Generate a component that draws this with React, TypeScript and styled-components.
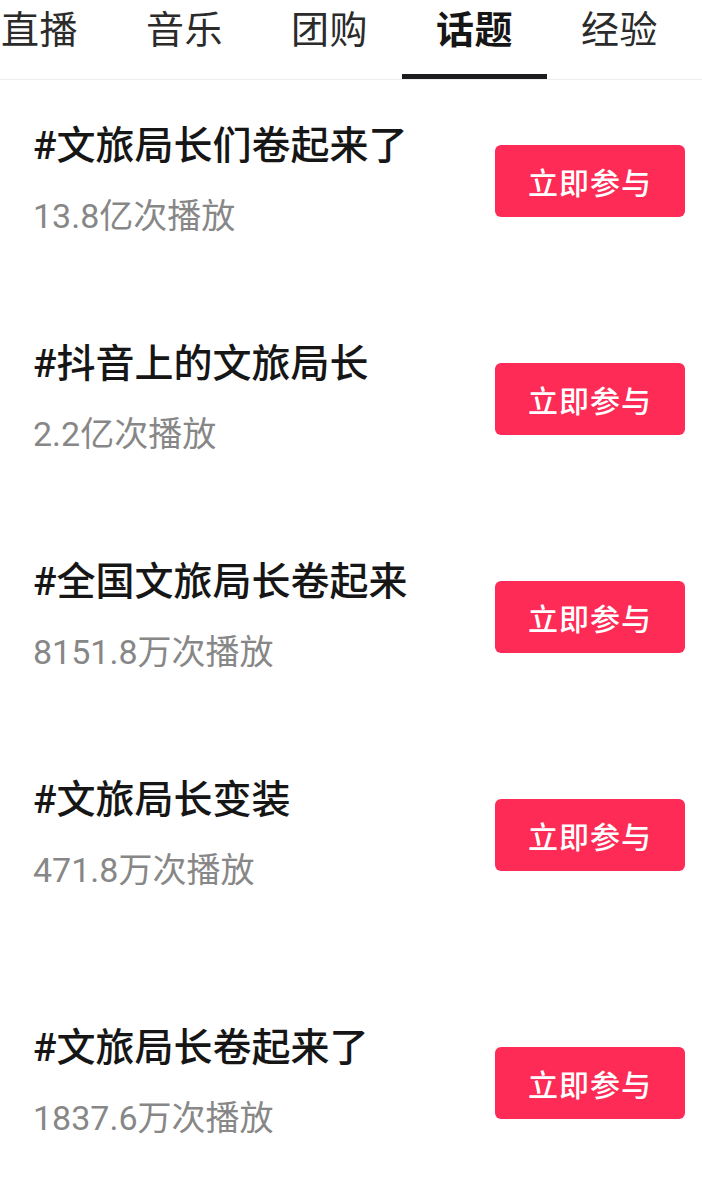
import React from 'react';
import styled, { createGlobalStyle } from 'styled-components';

type Topic = {
  title: string;
  plays: string;
  extra?: boolean;
};

const tabs = ['直播', '音乐', '团购', '话题', '经验'];
const activeTab = '话题';

const topics: Topic[] = [
  { title: '#文旅局长们卷起来了', plays: '13.8亿次播放' },
  { title: '#抖音上的文旅局长', plays: '2.2亿次播放' },
  { title: '#全国文旅局长卷起来', plays: '8151.8万次播放' },
  { title: '#文旅局长变装', plays: '471.8万次播放' },
  { title: '#文旅局长卷起来了', plays: '1837.6万次播放', extra: true },
];

const GlobalStyle = createGlobalStyle`
  html, body {
    margin: 0;
    padding: 0;
    background: #ffffff;
  }
  body {
    font-family: Roboto, "Noto Sans CJK SC", sans-serif;
    -webkit-font-smoothing: antialiased;
  }
`;

const Page = styled.div`
  width: 702px;
  min-height: 1192px;
  overflow: hidden;
  background: #ffffff;
`;

const TabBar = styled.nav`
  display: flex;
  height: 79px;
  margin-left: -33px;
  border-bottom: 1px solid #eeeeee;
`;

const Tab = styled.div`
  flex: 0 0 145px;
  display: flex;
  flex-direction: column;
  align-items: center;
`;

const TabLabel = styled.span<{ $active?: boolean }>`
  line-height: 60px;
  font-size: 38px;
  font-weight: ${({ $active }) => ($active ? 700 : 400)};
  color: ${({ $active }) => ($active ? '#161616' : '#2b2b2b')};
  letter-spacing: 0.5px;
`;

const Indicator = styled.div<{ $active?: boolean }>`
  width: 100%;
  height: 5px;
  margin-top: auto;
  background: ${({ $active }) => ($active ? '#1c1c1e' : 'transparent')};
`;

const List = styled.main`
  display: flex;
  flex-direction: column;
`;

// last topic sits a little lower in the feed
const Row = styled.section<{ $extra?: boolean }>`
  display: flex;
  align-items: center;
  justify-content: space-between;
  padding: ${({ $extra }) => ($extra ? '72px' : '42px')} 17px 58px 33px;
`;

const Info = styled.div`
  display: flex;
  flex-direction: column;
  gap: 22px;
`;

const Title = styled.h2`
  margin: 0;
  font-size: 39px;
  line-height: 48px;
  font-weight: 500;
  color: #161616;
`;

const Plays = styled.span`
  font-size: 34px;
  line-height: 48px;
  color: #878787;
`;

const JoinButton = styled.button`
  width: 190px;
  height: 72px;
  border: none;
  border-radius: 6px;
  background: #fd2b55;
  color: #ffffff;
  font-family: inherit;
  font-size: 30px;
  font-weight: 500;
  letter-spacing: 1px;
  cursor: pointer;
`;

export default function App() {
  return (
    <Page>
      <GlobalStyle />
      <TabBar>
        {tabs.map((t) => (
          <Tab key={t}>
            <TabLabel $active={t === activeTab}>{t}</TabLabel>
            <Indicator $active={t === activeTab} />
          </Tab>
        ))}
      </TabBar>
      <List>
        {topics.map((topic) => (
          <Row key={topic.title} $extra={topic.extra}>
            <Info>
              <Title>{topic.title}</Title>
              <Plays>{topic.plays}</Plays>
            </Info>
            <JoinButton>立即参与</JoinButton>
          </Row>
        ))}
      </List>
    </Page>
  );
}
